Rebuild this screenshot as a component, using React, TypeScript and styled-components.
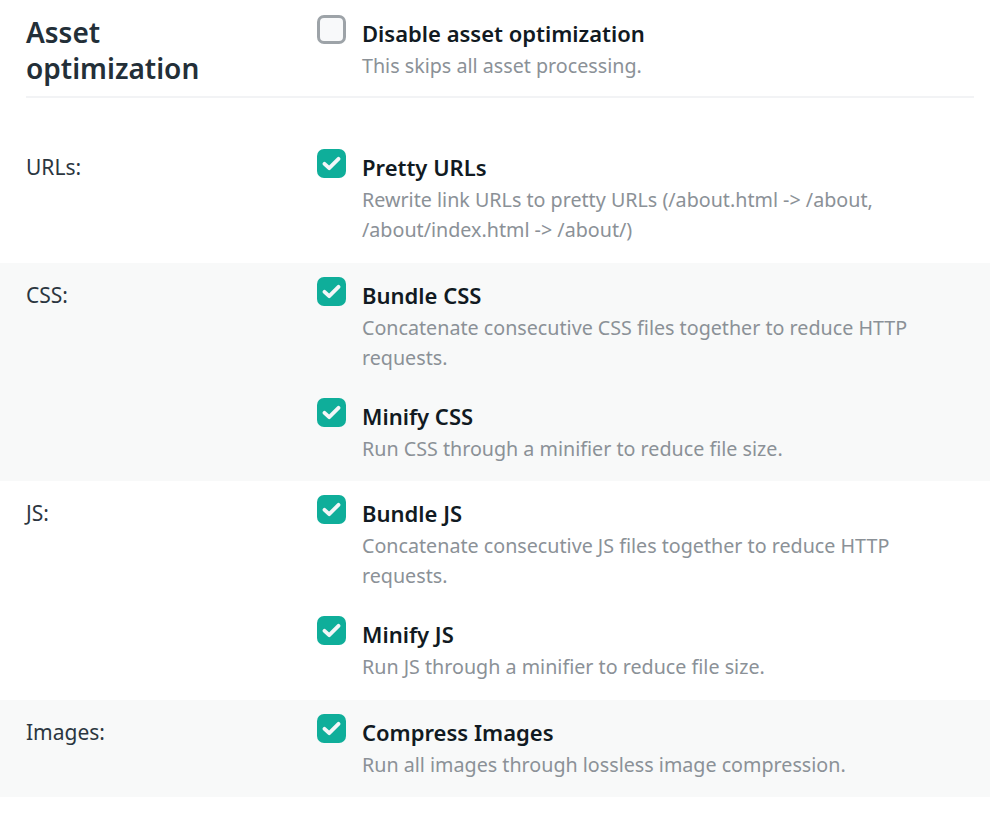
import React from "react";
import styled, { createGlobalStyle } from "styled-components";

const Global = createGlobalStyle`
  html, body { margin: 0; padding: 0; background: #ffffff; }
  body { font-family: "Noto Sans", "Open Sans", sans-serif; color: #1f2a33; }
`;

const Page = styled.div`
  width: 990px;
  padding-bottom: 20px;
`;

const Header = styled.div`
  display: grid;
  grid-template-columns: 291px 1fr;
  align-items: start;
  margin: 0 16px 37px 26px;
  padding: 14px 0 10px;
  border-bottom: 2px solid #f2f3f5;
`;

const Heading = styled.h2`
  margin: 0;
  font-size: 28px;
  line-height: 36px;
  font-weight: 600;
  color: #232f38;
`;

const HeaderOption = styled.div`
  padding-top: 4px;
`;

const Row = styled.div<{ $shaded?: boolean }>`
  display: grid;
  grid-template-columns: 291px 1fr;
  padding: 17px 26px 17.5px;
  background: ${(p) => (p.$shaded ? "#f8f9f9" : "#ffffff")};
`;

const Label = styled.div`
  font-size: 21px;
  line-height: 30px;
  color: #2b3640;
`;

const Options = styled.div`
  display: flex;
  flex-direction: column;
  gap: 28px;
`;

const Option = styled.div`
  display: grid;
  grid-template-columns: 29px 1fr;
  column-gap: 16px;
`;

const Box = styled.span<{ $checked?: boolean }>`
  box-sizing: border-box;
  width: 29px;
  height: 29px;
  margin-top: -3px;
  border-radius: 7px;
  display: flex;
  align-items: center;
  justify-content: center;
  background: ${(p) => (p.$checked ? "#0fae9a" : "#f8f9fa")};
  border: ${(p) => (p.$checked ? "none" : "3px solid #9da3a8")};
`;

const Text = styled.div`
  display: flex;
  flex-direction: column;
  gap: 3px;
`;

const Title = styled.div`
  font-size: 22px;
  line-height: 30px;
  font-weight: 600;
  color: #111a22;
`;

const Desc = styled.div`
  font-size: 19.7px;
  line-height: 30px;
  color: #8b9197;
  max-width: 580px;
`;

const Check = () => (
  <svg width="19" height="15" viewBox="0 0 19 15">
    <path d="M2.5 7.8 L7.2 12.2 L16.5 2.8" fill="none" stroke="#f4f6f8" strokeWidth="3.8" strokeLinecap="round" strokeLinejoin="round" />
  </svg>
);

type Opt = { title: string; desc: string; checked?: boolean };

const OptionItem = ({ title, desc, checked = true }: Opt) => (
  <Option>
    <Box $checked={checked}>{checked && <Check />}</Box>
    <Text>
      <Title>{title}</Title>
      <Desc>{desc}</Desc>
    </Text>
  </Option>
);

const sections: { label: string; shaded: boolean; opts: Opt[] }[] = [
  {
    label: "URLs:",
    shaded: false,
    opts: [
      {
        title: "Pretty URLs",
        desc: "Rewrite link URLs to pretty URLs (/about.html -> /about, /about/index.html -> /about/)",
      },
    ],
  },
  {
    label: "CSS:",
    shaded: true,
    opts: [
      { title: "Bundle CSS", desc: "Concatenate consecutive CSS files together to reduce HTTP requests." },
      { title: "Minify CSS", desc: "Run CSS through a minifier to reduce file size." },
    ],
  },
  {
    label: "JS:",
    shaded: false,
    opts: [
      { title: "Bundle JS", desc: "Concatenate consecutive JS files together to reduce HTTP requests." },
      { title: "Minify JS", desc: "Run JS through a minifier to reduce file size." },
    ],
  },
  {
    label: "Images:",
    shaded: true,
    opts: [{ title: "Compress Images", desc: "Run all images through lossless image compression." }],
  },
];

export default function App() {
  return (
    <Page>
      <Global />
      <Header>
        <Heading>
          Asset
          <br />
          optimization
        </Heading>
        <HeaderOption>
          <OptionItem title="Disable asset optimization" desc="This skips all asset processing." checked={false} />
        </HeaderOption>
      </Header>
      {sections.map((s) => (
        <Row key={s.label} $shaded={s.shaded}>
          <Label>{s.label}</Label>
          <Options>
            {s.opts.map((o) => (
              <OptionItem key={o.title} {...o} />
            ))}
          </Options>
        </Row>
      ))}
    </Page>
  );
}
